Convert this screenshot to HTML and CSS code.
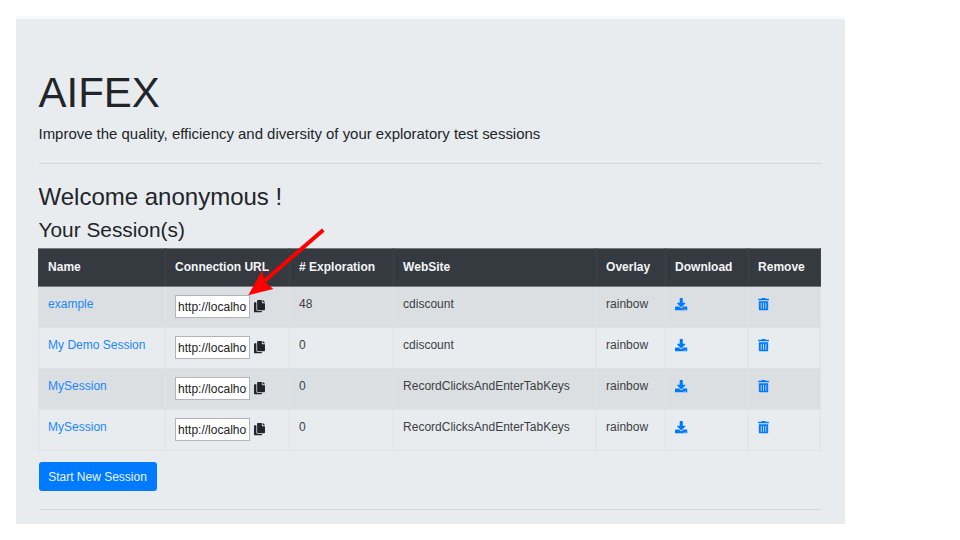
FILE: index.html
```html
<!DOCTYPE html>
<html lang="en">
<head>
<meta charset="utf-8">
<title>AIFEX</title>
<link rel="stylesheet" href="styles.css">
</head>
<body>
<svg class="defs" width="0" height="0">
  <symbol id="copy" viewBox="0 0 448 512"><path d="M320 448v40c0 13.255-10.745 24-24 24H24c-13.255 0-24-10.745-24-24V120c0-13.255 10.745-24 24-24h72v296c0 30.879 25.121 56 56 56h168zm0-344V0H152c-13.255 0-24 10.745-24 24v368c0 13.255 10.745 24 24 24h272c13.255 0 24-10.745 24-24V128H344c-13.2 0-24-10.8-24-24zm120.971-31.029L375.029 7.029A24 24 0 0 0 358.059 0H352v96h96v-6.059a24 24 0 0 0-7.029-16.97z"/></symbol>
  <symbol id="download" viewBox="0 0 512 512"><path d="M216 0h80c13.300 0 24 10.700 24 24v168h87.700c17.800 0 26.700 21.500 14.100 34.100L269.700 378.300c-7.500 7.500-19.800 7.500-27.300 0L90.100 226.100c-12.600-12.600-3.700-34.100 14.100-34.100H192V24c0-13.300 10.700-24 24-24zm296 376v112c0 13.300-10.700 24-24 24H24c-13.300 0-24-10.700-24-24V376c0-13.300 10.700-24 24-24h146.700l49 49c20.100 20.100 52.500 20.100 72.600 0l49-49H488c13.300 0 24 10.700 24 24zm-124 88c0-11-9-20-20-20s-20 9-20 20 9 20 20 20 20-9 20-20zm64 0c0-11-9-20-20-20s-20 9-20 20 9 20 20 20 20-9 20-20z"/></symbol>
  <symbol id="trash" viewBox="0 0 448 512"><path d="M32 464a48 48 0 0 0 48 48h288a48 48 0 0 0 48-48V128H32zm272-256a16 16 0 0 1 32 0v224a16 16 0 0 1-32 0zm-96 0a16 16 0 0 1 32 0v224a16 16 0 0 1-32 0zm-96 0a16 16 0 0 1 32 0v224a16 16 0 0 1-32 0zM432 32H312l-9.400-18.700A24 24 0 0 0 281.100 0H166.800a23.720 23.720 0 0 0-21.400 13.300L136 32H16A16 16 0 0 0 0 48v32a16 16 0 0 0 16 16h416a16 16 0 0 0 16-16V48a16 16 0 0 0-16-16z"/></symbol>
</svg>
<main class="jumbotron">
  <h1>AIFEX</h1>
  <p class="lead">Improve the quality, efficiency and diversity of your exploratory test sessions</p>
  <hr>
  <h2>Welcome anonymous !</h2>
  <h3>Your Session(s)</h3>
  <table>
    <colgroup><col class="c-name"><col class="c-url"><col class="c-count"><col class="c-site"><col class="c-overlay"><col class="c-download"><col class="c-remove"></colgroup>
    <thead>
      <tr><th>Name</th><th>Connection URL</th><th># Exploration</th><th>WebSite</th><th>Overlay</th><th>Download</th><th>Remove</th></tr>
    </thead>
    <tbody>
      <tr><td><a>example</a></td><td><div class="url"><input value="http://localhost"><svg class="copy"><use href="#copy"/></svg></div></td><td>48</td><td>cdiscount</td><td>rainbow</td><td><svg class="download"><use href="#download"/></svg></td><td><svg class="trash"><use href="#trash"/></svg></td></tr>
      <tr><td><a>My Demo Session</a></td><td><div class="url"><input value="http://localhost"><svg class="copy"><use href="#copy"/></svg></div></td><td>0</td><td>cdiscount</td><td>rainbow</td><td><svg class="download"><use href="#download"/></svg></td><td><svg class="trash"><use href="#trash"/></svg></td></tr>
      <tr><td><a>MySession</a></td><td><div class="url"><input value="http://localhost"><svg class="copy"><use href="#copy"/></svg></div></td><td>0</td><td>RecordClicksAndEnterTabKeys</td><td>rainbow</td><td><svg class="download"><use href="#download"/></svg></td><td><svg class="trash"><use href="#trash"/></svg></td></tr>
      <tr><td><a>MySession</a></td><td><div class="url"><input value="http://localhost"><svg class="copy"><use href="#copy"/></svg></div></td><td>0</td><td>RecordClicksAndEnterTabKeys</td><td>rainbow</td><td><svg class="download"><use href="#download"/></svg></td><td><svg class="trash"><use href="#trash"/></svg></td></tr>
    </tbody>
  </table>
  <button>Start New Session</button>
  <hr class="last">
</main>
<svg class="arrow" viewBox="0 0 80 70"><path d="M75.300 2L14 55" stroke="#f00" stroke-width="4"/><path d="M0.300 67.300L14.300 42L16 53L25.300 61Z" fill="#f00"/></svg>
</body>
</html>
```

FILE: styles.css
```css
* { box-sizing: border-box; }
body {
  margin: 0;
  padding: 16px 0 0 16px;
  height: 540px;
  overflow: hidden;
  background: #fff;
  color: #212529;
  font: 12px/18px "Liberation Sans", Arial, sans-serif;
}
.defs { position: absolute; }
.jumbotron {
  width: 829px;
  height: 508px;
  padding: 50px 24px 0 22.500px;
  border-top: 3px solid #f8f9fa;
  border-radius: 0 4px 0 0;
  background: #e9ecef;
}
h1, h2, h3, p { margin: 0; font-weight: 400; }
h1 { font-size: 42px; line-height: 48px; }
.lead { margin-top: 6px; font-size: 14.950px; line-height: 22px; }
hr { margin: 18px 0 0; border: 0; border-top: 1px solid #d4d7da; }
h2 { margin-top: 18px; font-size: 24px; line-height: 30px; }
h3 { margin-top: 5px; font-size: 20.850px; line-height: 26px; }
table {
  width: 782px;
  margin-top: 5px;
  margin-left: -0.800px;
  table-layout: fixed;
  border-collapse: collapse;
}
.c-name { width: 127px; }
.c-url { width: 124px; }
.c-count { width: 104px; }
.c-site { width: 203px; }
.c-overlay { width: 69px; }
.c-download { width: 83px; }
.c-remove { width: 72px; }
th, td {
  padding: 8px 0 0 9.400px;
  border: 1px solid #dfe3e6;
  text-align: left;
  vertical-align: top;
  white-space: nowrap;
}
th { height: 38px; padding-top: 9px; background: #343a40; color: #f4f5f6; border-color: #3d444b; }
thead th { border-top-color: #747a80; border-bottom-color: #747a80; }
td { height: 41px; color: #3c4044; }
tbody tr:nth-child(odd) { background: #dcdfe2; }
a { color: #1a88fb; }
.url { display: flex; align-items: center; gap: 4px; }
input {
  width: 75px;
  height: 23px;
  padding: 1px 2px;
  border: 1px solid #b3b4ba;
  border-radius: 0;
  background: #fff;
  color: #222;
  font: inherit;
}
.copy { width: 11px; height: 12.500px; fill: #212529; }
.download { display: block; width: 12.500px; height: 12.500px; margin-top: 3px; fill: #007bff; }
.trash { display: block; width: 11px; height: 12.500px; margin-top: 3px; fill: #007bff; }
button {
  display: block;
  width: 118px;
  height: 29px;
  margin-top: 11px;
  padding: 0;
  border: 0;
  border-radius: 3px;
  background: #007bff;
  color: #e8f3ff;
  font: inherit;
}
.last { margin-top: 18px; }
.arrow { position: absolute; left: 248px; top: 228px; width: 80px; height: 70px; }
```
